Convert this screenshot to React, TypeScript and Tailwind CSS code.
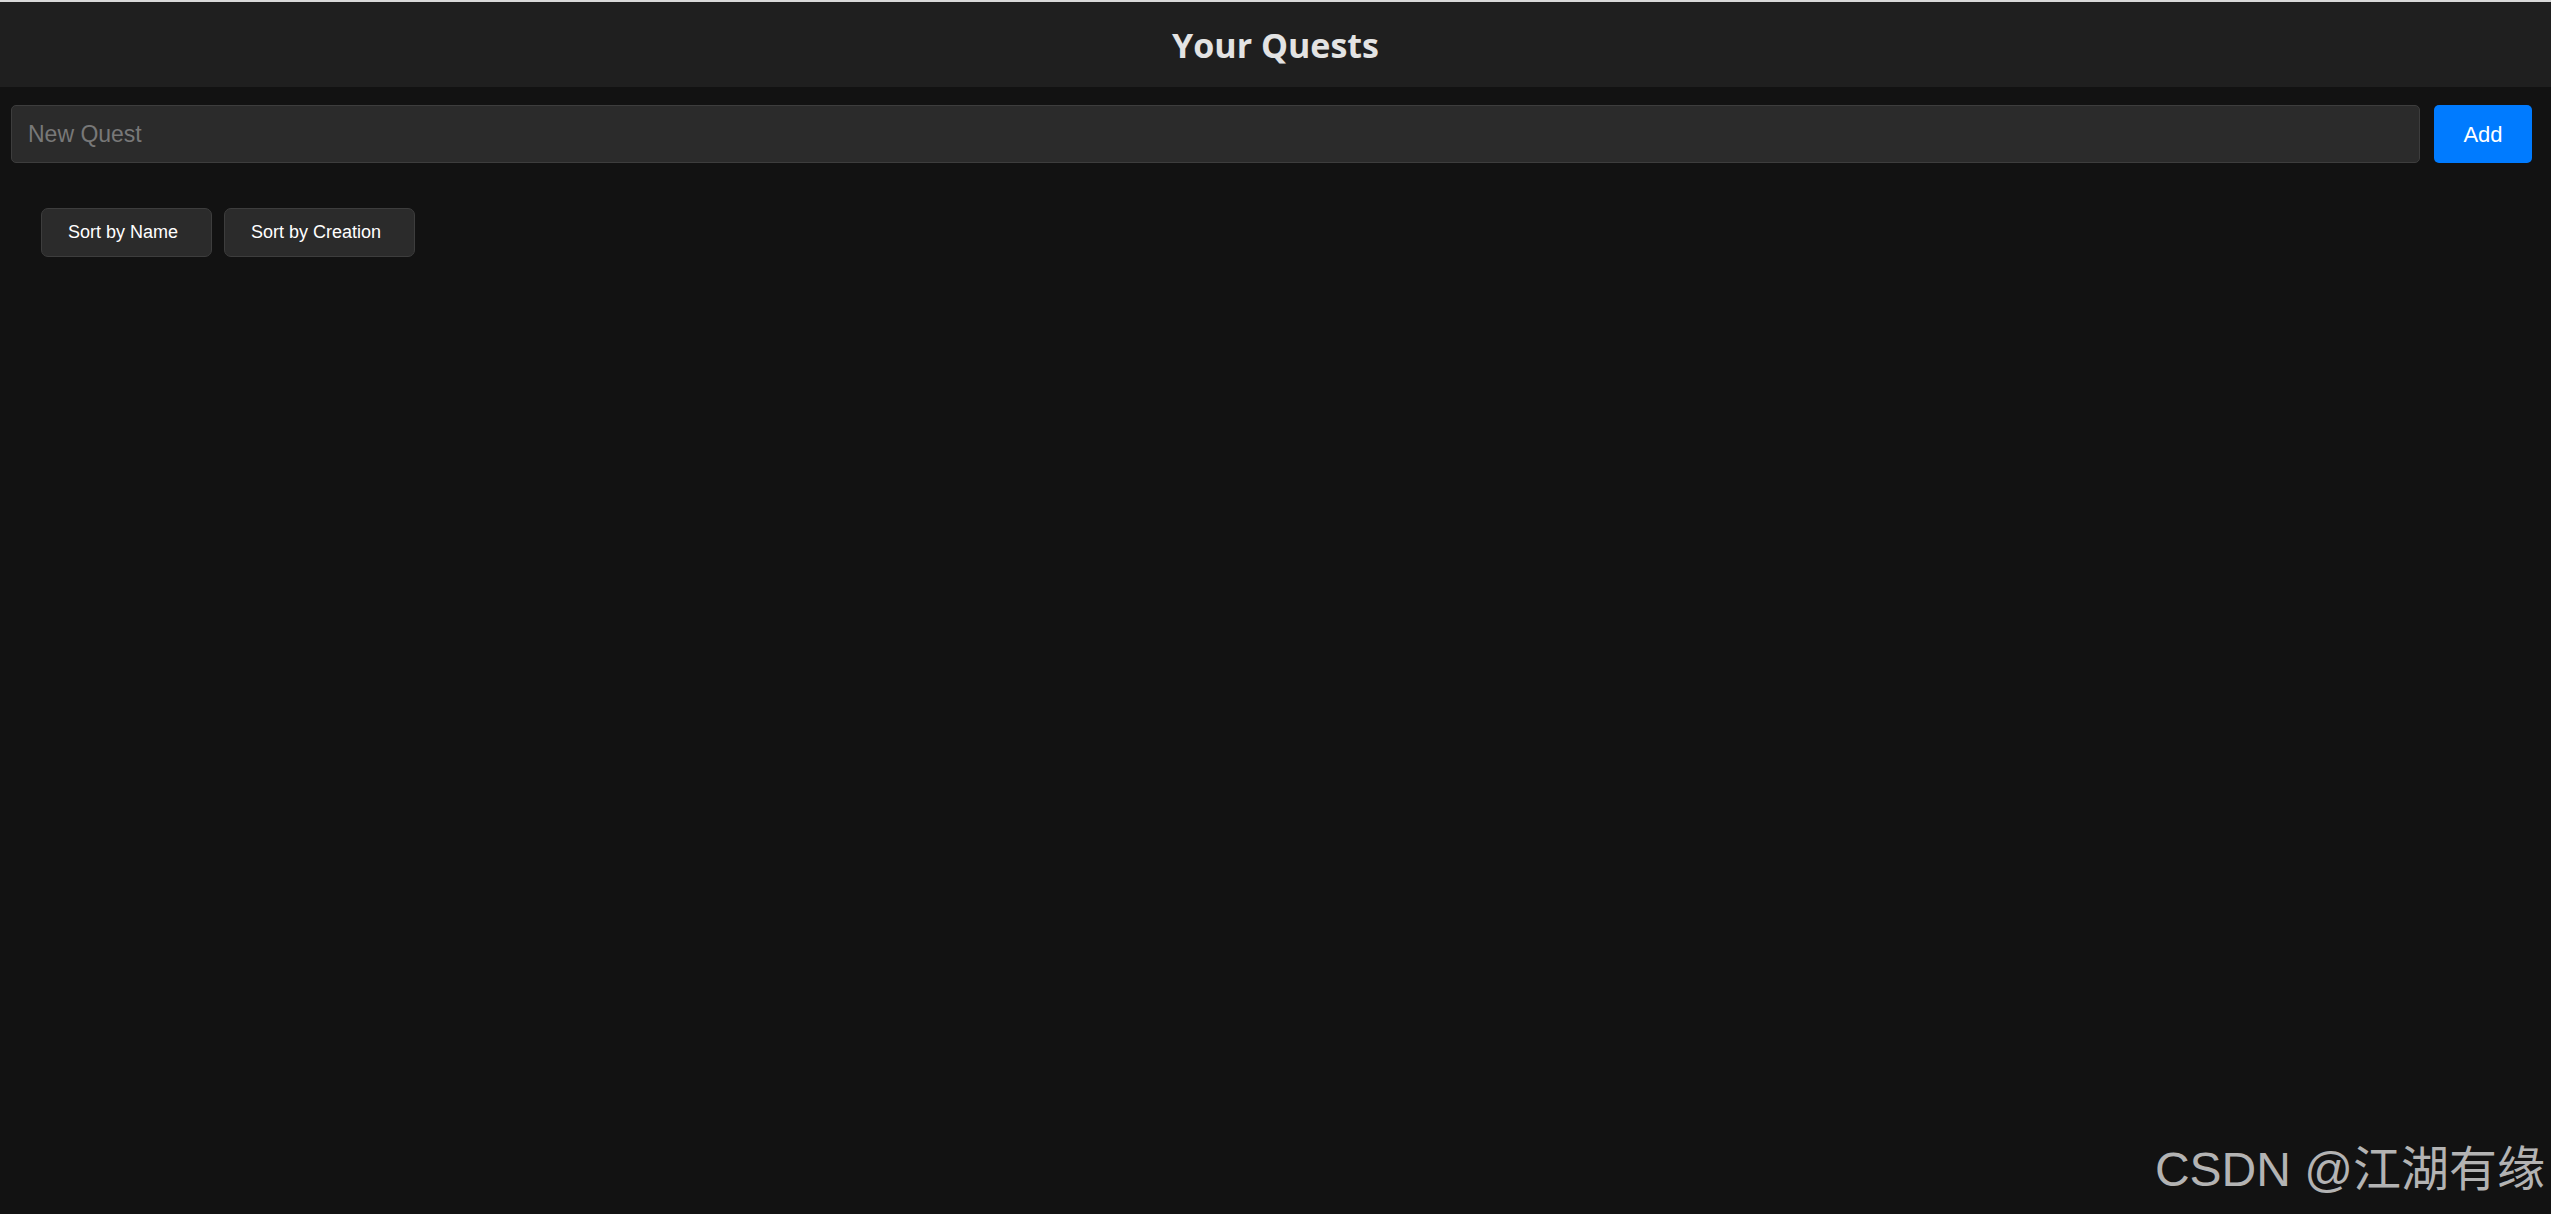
import { useState } from "react";

type Quest = { id: number; name: string; createdAt: number };

function App() {
  const [quests, setQuests] = useState<Quest[]>([]);
  const [newQuest, setNewQuest] = useState<string>("");

  // add quest
  const addQuest = () => {
    if (!newQuest.trim()) return;
    setQuests([...quests, { id: Date.now(), name: newQuest.trim(), createdAt: Date.now() }]);
    setNewQuest("");
  };

  // sort handlers
  const sortByName = () => {
    setQuests([...quests].sort((a, b) => a.name.localeCompare(b.name)));
  };
  const sortByCreation = () => {
    setQuests([...quests].sort((a, b) => a.createdAt - b.createdAt));
  };

  return (
    <div className="relative w-full min-h-screen bg-[#121212] flex flex-col font-['Liberation_Sans',Arial,sans-serif]">
      <div className="h-[2px] bg-[#d9d9d9]" />

      {/* header */}
      <header className="h-[85px] bg-[#1f1f1f] flex items-center justify-center">
        <h1 className="font-['Open_Sans',sans-serif] font-bold text-[34px] text-[#e3e3e3] leading-none">
          Your Quests
        </h1>
      </header>

      {/* input row */}
      <div className="flex items-center gap-[14px] pt-[18px] pl-[11px] pr-[19px]">
        <input
          type="text"
          value={newQuest}
          onChange={(e) => setNewQuest(e.target.value)}
          placeholder="New Quest"
          className="flex-1 h-[58px] px-[16px] bg-[#2b2b2b] border border-[#3d3d3d] rounded-[5px] text-[23px] text-white placeholder:text-[#787878] outline-none"
        />
        <button
          onClick={addQuest}
          className="w-[98px] h-[58px] bg-[#007bff] rounded-[5px] text-white text-[22px]"
        >
          Add
        </button>
      </div>

      {/* sort buttons */}
      <div className="flex gap-[12px] mt-[45px] pl-[41px]">
        <button
          onClick={sortByName}
          className="h-[49px] pl-[26px] pr-[33px] bg-[#2b2b2b] border border-[#3d3d3d] rounded-[7px] text-white text-[18px]"
        >
          Sort by Name
        </button>
        <button
          onClick={sortByCreation}
          className="h-[49px] pl-[26px] pr-[33px] bg-[#2b2b2b] border border-[#3d3d3d] rounded-[7px] text-white text-[18px]"
        >
          Sort by Creation
        </button>
      </div>

      <ul className="flex flex-col gap-2 px-[41px] mt-4">
        {quests.map((q) => (
          <li key={q.id} className="text-white text-[18px]">
            {q.name}
          </li>
        ))}
      </ul>

      {/* watermark */}
      <div className="absolute right-[6px] bottom-[20px] text-[48px] leading-none text-[#b3b3b3] font-['Liberation_Sans','Noto_Sans_CJK_SC',sans-serif]">
        CSDN @江湖有缘
      </div>
    </div>
  );
}

export default App;
